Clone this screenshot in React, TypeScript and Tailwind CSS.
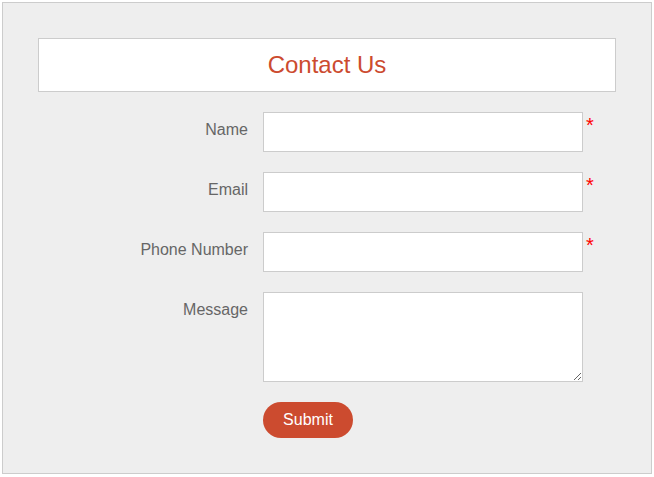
import React from 'react';

const fields = [
  { label: 'Name', required: true },
  { label: 'Email', required: true },
  { label: 'Phone Number', required: true },
];

export default function App() {
  return (
    <div className="pl-[2px] pt-[2px] font-['Liberation_Sans',Arial,sans-serif]">
      <div className="w-[650px] h-[472px] border border-[#cccccc] bg-[#eeeeee] px-[35px] pt-[35px]">
        <div className="w-[578px] h-[54px] border border-[#cccccc] bg-white flex items-center justify-center">
          <h1 className="text-[24px] text-[#cc4b2f] leading-none">Contact Us</h1>
        </div>

        <form className="mt-[20px] flex flex-col gap-[20px]" onSubmit={(e) => e.preventDefault()}>
          {fields.map((f) => (
            <div key={f.label} className="flex items-start">
              <label className="w-[210px] text-right pt-[6px] text-[16px] text-[#666666]">{f.label}</label>
              <input
                type="text"
                className="ml-[15px] w-[320px] h-[40px] border border-[#cccccc] bg-white"
              />
              {f.required && <span className="ml-[3px] mt-[3px] text-[20px] leading-none text-[#ff0000]">*</span>}
            </div>
          ))}
          <div className="flex items-start">
            <label className="w-[210px] text-right pt-[6px] text-[16px] text-[#666666]">Message</label>
            <textarea className="ml-[15px] w-[320px] h-[90px] border border-[#cccccc] bg-white resize" />
          </div>
          <div className="flex">
            <button
              type="submit"
              className="ml-[225px] w-[90px] h-[36px] rounded-full bg-[#cc4b2f] text-white text-[16px]"
            >
              Submit
            </button>
          </div>
        </form>
      </div>
    </div>
  );
}
